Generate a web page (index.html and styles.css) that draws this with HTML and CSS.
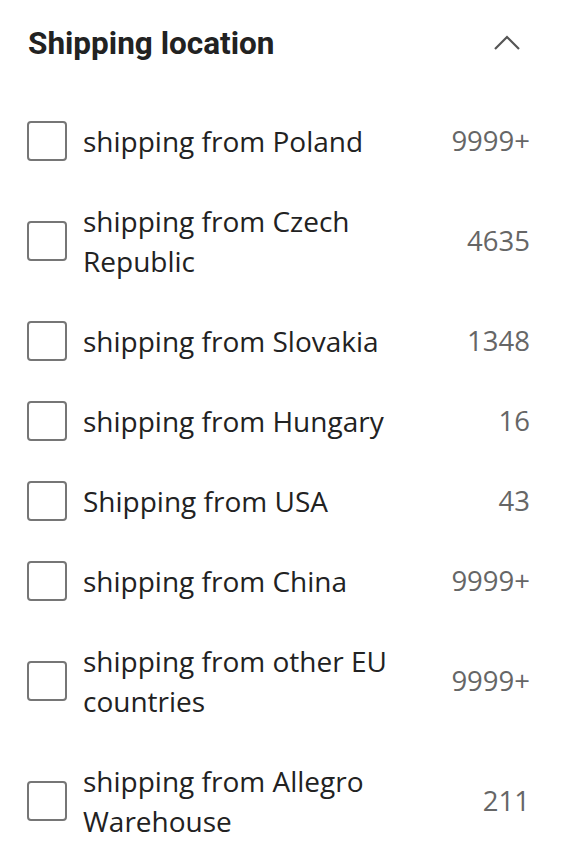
FILE: index.html
```html
<!DOCTYPE html>
<html lang="en">
<head>
    <meta charset="UTF-8">
    <meta name="viewport" content="width=device-width, initial-scale=1.0">
    <title>Shipping location</title>
    <link rel="stylesheet" href="styles.css">
</head>
<body>
    <section class="filter">
        <div class="filter-header">
            <h2 class="filter-title">Shipping location</h2>
            <button class="toggle-btn" aria-label="Collapse">
                <svg width="28" height="18" viewBox="0 0 28 18">
                    <polyline points="2,15 14,3 26,15" fill="none" stroke="#555" stroke-width="2.2"/>
                </svg>
            </button>
        </div>

        <ul class="filter-list">
            <li class="filter-item">
                <span class="checkbox"></span>
                <span class="label">shipping from Poland</span>
                <span class="count">9999+</span>
            </li>
            <li class="filter-item">
                <span class="checkbox"></span>
                <span class="label">shipping from Czech Republic</span>
                <span class="count">4635</span>
            </li>
            <li class="filter-item">
                <span class="checkbox"></span>
                <span class="label">shipping from Slovakia</span>
                <span class="count">1348</span>
            </li>
            <li class="filter-item">
                <span class="checkbox"></span>
                <span class="label">shipping from Hungary</span>
                <span class="count">16</span>
            </li>
            <li class="filter-item">
                <span class="checkbox"></span>
                <span class="label">Shipping from USA</span>
                <span class="count">43</span>
            </li>
            <li class="filter-item">
                <span class="checkbox"></span>
                <span class="label">shipping from China</span>
                <span class="count">9999+</span>
            </li>
            <li class="filter-item">
                <span class="checkbox"></span>
                <span class="label">shipping from other EU countries</span>
                <span class="count">9999+</span>
            </li>
            <li class="filter-item">
                <span class="checkbox"></span>
                <span class="label">shipping from Allegro Warehouse</span>
                <span class="count">211</span>
            </li>
        </ul>
    </section>
</body>
</html>
```

FILE: styles.css
```css
* {
    margin: 0;
    padding: 0;
    box-sizing: border-box;
}

body {
    font-family: 'Open Sans', 'Noto Sans', sans-serif;
    background: #fff;
    color: #222;
}

.filter {
    padding: 0 36px 0 27px;
}

.filter-header {
    height: 86px;
    display: flex;
    align-items: center;
    justify-content: space-between;
}

.filter-title {
    font-family: 'Roboto', 'Liberation Sans', sans-serif;
    font-size: 31.5px;
    font-weight: 700;
    color: #222;
    padding-left: 1px;
}

.toggle-btn {
    background: none;
    border: none;
    display: flex;
    margin-right: 9px;
    cursor: pointer;
}

/* list of options */
.filter-list {
    list-style: none;
    margin-top: 15px;
}

.filter-item {
    display: flex;
    align-items: center;
    gap: 16px;
    padding: 20px 0;
}

.checkbox {
    flex: none;
    width: 40px;
    height: 40px;
    border: 2px solid #767676;
    border-radius: 4px;
}

.label {
    flex: 1;
    font-size: 28px;
    line-height: 40px;
}

.count {
    flex: none;
    min-width: 100px;
    text-align: right;
    font-size: 27.5px;
    line-height: 40px;
    color: #666;
}
```
